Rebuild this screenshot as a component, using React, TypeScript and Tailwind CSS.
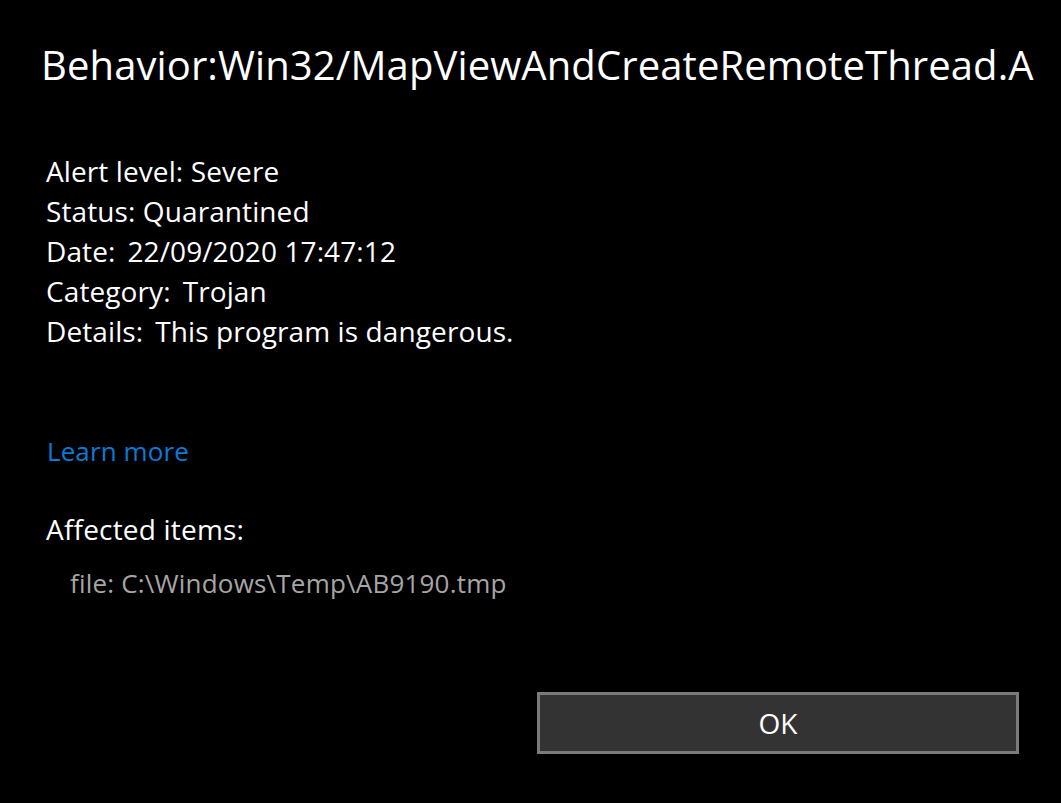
import React from "react";

export default function App() {
  const font = { fontFamily: '"Open Sans", "Noto Sans", sans-serif' };
  return (
    <div className="w-[1061px] h-[803px] bg-black text-white flex flex-col overflow-hidden" style={font}>
      <div className="pl-[41px] pt-[38px] text-[40px] leading-[54px] tracking-[0.1px] whitespace-nowrap">
        Behavior:Win32/MapViewAndCreateRemoteThread.A
      </div>
      <div className="pl-[46px] pt-[59px] flex flex-col text-[28px] leading-[40px] tracking-[0.1px] whitespace-nowrap">
        <div>Alert level: Severe</div>
        <div>Status: Quarantined</div>
        <div>
          Date:<span className="ml-[12px]">22/09/2020 17:47:12</span>
        </div>
        <div>
          Category:<span className="ml-[12px]">Trojan</span>
        </div>
        <div>
          Details:<span className="ml-[12px]">This program is dangerous.</span>
        </div>
      </div>
      <div className="pl-[47px] pt-[80px] text-[26px] leading-[40px] text-[#0a7ad6] tracking-[0.1px]">Learn more</div>
      <div className="pl-[46px] pt-[38px] text-[28px] leading-[40px] tracking-[0.2px]">Affected items:</div>
      <div className="pl-[70px] pt-[14px] text-[26px] leading-[40px] text-[#a6a6a6] tracking-[0.2px] whitespace-nowrap">
        file: C:\Windows\Temp\AB9190.tmp
      </div>
      <div className="flex justify-end pr-[42px] pt-[89px]">
        <button className="w-[482px] h-[62px] bg-[#333333] border-[3px] border-[#7a7a7a] text-[28px] text-white flex items-center justify-center">
          OK
        </button>
      </div>
    </div>
  );
}
